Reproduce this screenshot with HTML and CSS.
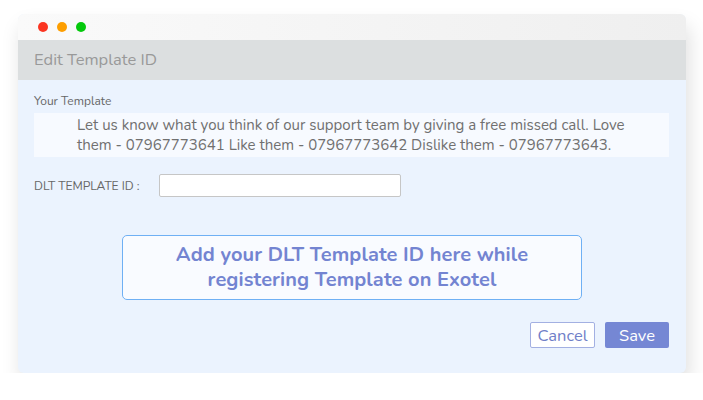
FILE: index.html
```html
<!DOCTYPE html>
<html lang="en">
<head>
    <meta charset="UTF-8">
    <title>Edit Template ID</title>
    <link rel="stylesheet" href="styles.css">
</head>
<body>
<div id="window">
    <div class="titlebar">
        <span class="dot red"></span>
        <span class="dot orange"></span>
        <span class="dot green"></span>
    </div>
    <div class="header">Edit Template ID</div>
    <div class="content">
        <div class="label">Your Template</div>
        <div class="template">Let us know what you think of our support team by giving a free missed call. Love them - 07967773641 Like them - 07967773642 Dislike them - 07967773643.</div>
        <div class="field">
            <span class="label">DLT TEMPLATE ID :</span>
            <input type="text" class="input"/>
        </div>
        <div class="note">
            <p>Add your DLT Template ID here while</p>
            <p>registering Template on Exotel</p>
        </div>
        <div class="actions">
            <button class="btn cancel">Cancel</button>
            <button class="btn save">Save</button>
        </div>
    </div>
</div>
</body>
</html>
```
FILE: styles.css
```css
*{
    margin: 0;
    padding: 0;
    box-sizing: border-box;
}
body{
    background: #fff;
    padding: 14px 0 0 18px;
    font-family: "Nunito", Lato, "Open Sans", sans-serif;
}

#window{
    width: 668px;
    height: 359px;
    border-radius: 6px;
    background: #ebf3fe;
    box-shadow: 3px 12px 20px rgba(0,0,0,0.13);
    display: flex;
    flex-direction: column;
}

.titlebar{
    height: 26px;
    background: linear-gradient(to right, #fafafa, #efefef);
    border-radius: 6px 6px 0 0;
    display: flex;
    align-items: center;
    gap: 9px;
    padding: 0 0 0 20px;
}
.dot{
    width: 10px;
    height: 10px;
    border-radius: 50%;
}
.red{ background: #fb3521; }
.orange{ background: #fd9e00; }
.green{ background: #04c90c; }

.header{
    height: 40px;
    background: #dcdfe0;
    color: #999;
    font-size: 16.5px;
    line-height: 40px;
    padding-left: 16px;
}

.content{
    flex: 1;
    padding: 13px 16px 0 16px;
}
.label{
    font-size: 12px;
    color: #666;
}
.template{
    margin-top: 4px;
    width: 635px;
    height: 44px;
    background: #f7faff;
    color: #707070;
    font-size: 15px;
    line-height: 20px;
    padding: 2px 10px 0 43px;
}

.field{
    display: flex;
    align-items: center;
    margin-top: 17px;
}
.field .label{
    width: 125px;
}
.input{
    width: 242px;
    height: 23px;
    border: 1px solid #c6c6c6;
    border-radius: 2px;
    background: #fff;
}

.note{
    margin: 38px 0 0 88px;
    width: 460px;
    height: 65px;
    border: 1px solid #6fb0f4;
    border-radius: 5px;
    background: #f9fbff;
    color: #7384d1;
    font-weight: bold;
    font-size: 20px;
    line-height: 25px;
    text-align: center;
    padding-top: 6px;
    letter-spacing: 0.1px;
}

.actions{
    display: flex;
    justify-content: flex-end;
    gap: 10px;
    margin-top: 22px;
    padding-right: 1px;
}
.btn{
    height: 26px;
    font-family: inherit;
    font-size: 16.5px;
    border-radius: 2px;
    cursor: pointer;
}
.cancel{
    width: 65px;
    background: #fff;
    border: 1px solid #a3b0e2;
    color: #7080c8;
}
.save{
    width: 64px;
    background: #7587d4;
    border: none;
    color: #fff;
}
```
